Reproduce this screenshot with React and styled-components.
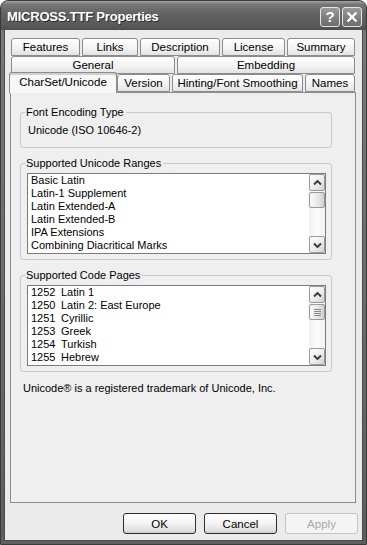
import React from "react";
import styled, { createGlobalStyle } from "styled-components";

const GlobalStyle = createGlobalStyle`
  html, body {
    margin: 0;
    background: #ffffff;
    font-family: "Liberation Sans", Arial, sans-serif;
  }
  * { box-sizing: border-box; }
`;

const Window = styled.div`
  width: 367px;
  height: 545px;
  display: flex;
  flex-direction: column;
  background: linear-gradient(180deg, #7a7a7a 0%, #5e5e5e 100%);
  border: 1px solid #3a3a3a;
  border-radius: 8px 8px 0 0;
  overflow: hidden;
`;

const TitleBar = styled.div`
  height: 29px;
  flex-shrink: 0;
  display: flex;
  align-items: center;
  justify-content: space-between;
  padding: 1px 4px 0 6px;
  background: linear-gradient(180deg, #a3a3a3 0%, #767676 12%, #626262 45%, #5a5a5a 80%, #4e4e4e 100%);
`;

const Title = styled.span`
  color: #ffffff;
  font-size: 13px;
  font-weight: bold;
  letter-spacing: -0.2px;
  text-shadow: 1px 1px 0 #2c2c2c;
`;

const CapButtons = styled.div`
  display: flex;
  gap: 2px;
  margin-top: 1px;
`;

const CapButton = styled.div`
  width: 20px;
  height: 20px;
  border: 1px solid #e6e6e6;
  border-radius: 3px;
  background: linear-gradient(180deg, #9a9a9a 0%, #7c7c7c 60%, #6e6e6e 100%);
  display: flex;
  align-items: center;
  justify-content: center;
  color: #ffffff;
  font-size: 15px;
  font-weight: bold;
  line-height: 1;
`;

const Body = styled.div`
  flex: 1;
  margin: 0 3px 3px 3px;
  background: #ebebeb;
  display: flex;
  flex-direction: column;
  padding: 8px 5px 7px 6px;
  box-shadow: inset 1px 0 0 #4a4a4a, inset -1px 0 0 #4a4a4a, inset 0 -1px 0 #4a4a4a;
`;

const TabStrip = styled.div`
  display: flex;
  flex-direction: column;
  padding-left: 1px;
  margin-right: 2px;
  position: relative;
  z-index: 1;
`;

const TabRow = styled.div`
  display: flex;
  gap: ${(p) => p.$gap || 2}px;
  height: 18px;
  align-items: flex-end;
`;

const Tab = styled.div`
  width: ${(p) => p.$w}px;
  height: ${(p) => (p.$active ? 21 : 18)}px;
  margin: ${(p) => (p.$active ? "0 -2px -1px -2px" : "0")};
  flex-shrink: 0;
  border: 1px solid #8c8c8c;
  border-bottom: ${(p) => (p.$active ? "none" : "1px solid #8c8c8c")};
  border-radius: 3px 3px 0 0;
  background: ${(p) =>
    p.$active
      ? "#f7f7f7"
      : "linear-gradient(180deg, #ffffff 0%, #f2f2f2 60%, #e2e2e2 100%)"};
  box-shadow: ${(p) => (p.$active ? "inset 0 2px 0 #d0d0d0" : "none")};
  display: flex;
  align-items: ${(p) => (p.$active ? "flex-start" : "center")};
  padding-top: ${(p) => (p.$active ? 3 : 0)}px;
  justify-content: center;
  font-size: 11.5px;
  color: #000;
  white-space: nowrap;
  position: relative;
  z-index: ${(p) => (p.$active ? 2 : 0)};
`;

const Panel = styled.div`
  flex: 1;
  margin-right: 2px;
  background: #efefef;
  border: 1px solid #8c8c8c;
  padding: 13px 23px 0 9px;
  display: flex;
  flex-direction: column;
  gap: 9px;
`;

const Group = styled.fieldset`
  margin: 0;
  min-width: 0;
  border: 1px solid #c9c9c9;
  border-radius: 3px;
  padding: ${(p) => p.$pad || "3px 5px 5px 6px"};
`;

const Legend = styled.legend`
  margin-left: -2px;
  padding: 0 2px 0 1px;
  font-size: 11px;
  line-height: 13px;
  color: #000;
`;

const GroupText = styled.div`
  font-size: 11px;
  line-height: 13px;
  padding-left: 1px;
`;

const ListBox = styled.div`
  height: 81px;
  display: flex;
  background: #ffffff;
  border: 1px solid #7b7b7b;
`;

const Items = styled.div`
  flex: 1;
  padding-left: 3px;
  overflow: hidden;
`;

const Item = styled.div`
  display: flex;
  font-size: 11px;
  line-height: 13px;
  white-space: nowrap;
`;

const Code = styled.span`
  width: 30px;
`;

const ScrollBar = styled.div`
  width: 16px;
  display: flex;
  flex-direction: column;
  background: linear-gradient(90deg, #f0f0f0 0%, #fbfbfb 50%, #f0f0f0 100%);
`;

const ScrollBtn = styled.div`
  height: 17px;
  border: 1px solid #9a9a9a;
  border-radius: 2px;
  background: linear-gradient(135deg, #ffffff 0%, #ececec 55%, #d2d2d2 100%);
  display: flex;
  align-items: center;
  justify-content: center;
`;

const Thumb = styled.div`
  height: 16px;
  margin-top: ${(p) => p.$top || 0}px;
  border: 1px solid #9a9a9a;
  border-radius: 2px;
  background: linear-gradient(90deg, #fafafa 0%, #e6e6e6 60%, #cfcfcf 100%);
  display: flex;
  flex-direction: column;
  align-items: center;
  justify-content: center;
  gap: 1px;
`;

const Grip = styled.div`
  width: 7px;
  height: 1px;
  background: #8a8a8a;
`;

const Track = styled.div`
  flex: 1;
`;

const Note = styled.div`
  font-size: 11px;
  line-height: 13px;
  padding-left: 3px;
  margin-top: 1px;
`;

const ButtonRow = styled.div`
  display: flex;
  justify-content: flex-end;
  gap: 8px;
  margin-top: 10px;
`;

const Button = styled.div`
  width: 73px;
  height: 21px;
  border: 1px solid ${(p) => (p.$disabled ? "#c4c4c4" : "#2e2e2e")};
  border-radius: 3px;
  background: ${(p) =>
    p.$disabled
      ? "#f4f4f4"
      : "linear-gradient(180deg, #ffffff 0%, #f3f3f3 50%, #dedede 90%, #c8c8c8 100%)"};
  color: ${(p) => (p.$disabled ? "#a8a8a8" : "#000")};
  font-size: 11.5px;
  display: flex;
  align-items: center;
  justify-content: center;
`;

const Arrow = ({ down }) => (
  <svg width="9" height="6" viewBox="0 0 9 6">
    <path
      d={down ? "M1 1.5 L4.5 5 L8 1.5" : "M1 4.5 L4.5 1 L8 4.5"}
      fill="none"
      stroke="#3c3c3c"
      strokeWidth="2"
    />
  </svg>
);

const Scroll = ({ grip }) => (
  <ScrollBar>
    <ScrollBtn>
      <Arrow />
    </ScrollBtn>
    <Thumb $top={1}>
      {grip && (
        <>
          <Grip />
          <Grip />
          <Grip />
          <Grip />
        </>
      )}
    </Thumb>
    <Track />
    <ScrollBtn>
      <Arrow down />
    </ScrollBtn>
  </ScrollBar>
);

const ranges = [
  "Basic Latin",
  "Latin-1 Supplement",
  "Latin Extended-A",
  "Latin Extended-B",
  "IPA Extensions",
  "Combining Diacritical Marks",
];

const pages = [
  ["1252", "Latin 1"],
  ["1250", "Latin 2: East Europe"],
  ["1251", "Cyrillic"],
  ["1253", "Greek"],
  ["1254", "Turkish"],
  ["1255", "Hebrew"],
];

export default function App() {
  return (
    <>
      <GlobalStyle />
      <Window>
        <TitleBar>
          <Title>MICROSS.TTF Properties</Title>
          <CapButtons>
            <CapButton>?</CapButton>
            <CapButton>
              <svg width="12" height="12" viewBox="0 0 12 12">
                <path d="M1.5 1.5 L10.5 10.5 M10.5 1.5 L1.5 10.5" stroke="#fff" strokeWidth="2.4" />
              </svg>
            </CapButton>
          </CapButtons>
        </TitleBar>
        <Body>
          <TabStrip>
            <TabRow>
              <Tab $w={69}>Features</Tab>
              <Tab $w={56}>Links</Tab>
              <Tab $w={80}>Description</Tab>
              <Tab $w={63}>License</Tab>
              <Tab $w={68}>Summary</Tab>
            </TabRow>
            <TabRow>
              <Tab $w={164}>General</Tab>
              <Tab $w={178}>Embedding</Tab>
            </TabRow>
            <TabRow>
              <Tab $w={108} $active>CharSet/Unicode</Tab>
              <Tab $w={53}>Version</Tab>
              <Tab $w={131}>Hinting/Font Smoothing</Tab>
              <Tab $w={50}>Names</Tab>
            </TabRow>
          </TabStrip>
          <Panel>
            <Group $pad="5px 6px 10px 6px">
              <Legend>Font Encoding Type</Legend>
              <GroupText>Unicode (ISO 10646-2)</GroupText>
            </Group>
            <Group>
              <Legend>Supported Unicode Ranges</Legend>
              <ListBox>
                <Items>
                  {ranges.map((r) => (
                    <Item key={r}>{r}</Item>
                  ))}
                </Items>
                <Scroll />
              </ListBox>
            </Group>
            <Group>
              <Legend>Supported Code Pages</Legend>
              <ListBox>
                <Items>
                  {pages.map(([c, n]) => (
                    <Item key={c}>
                      <Code>{c}</Code>
                      {n}
                    </Item>
                  ))}
                </Items>
                <Scroll grip />
              </ListBox>
            </Group>
            <Note>Unicode® is a registered trademark of Unicode, Inc.</Note>
          </Panel>
          <ButtonRow>
            <Button>OK</Button>
            <Button>Cancel</Button>
            <Button $disabled>Apply</Button>
          </ButtonRow>
        </Body>
      </Window>
    </>
  );
}
